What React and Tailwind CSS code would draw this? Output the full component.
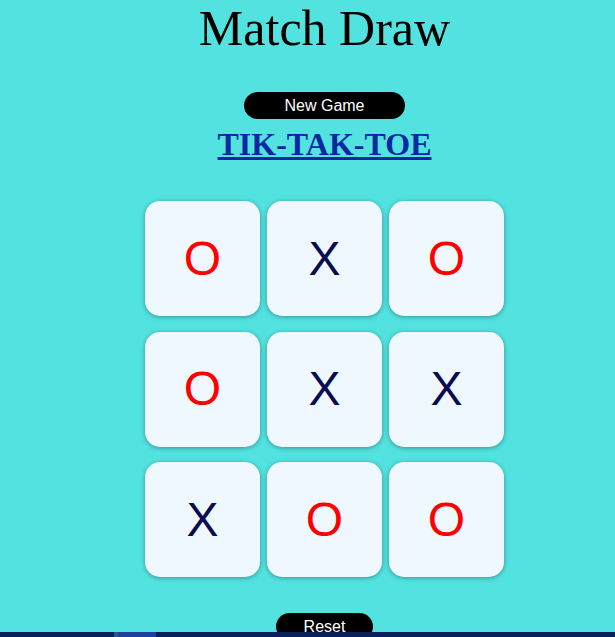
import React from "react";

const board = ["O", "X", "O", "O", "X", "X", "X", "O", "O"];

export default function App() {
  return (
    <div className="relative h-[637px] w-[615px] overflow-hidden bg-[#52e3e1]">
      <div className="flex w-[649px] flex-col items-center">
        <h1 className="mt-px text-[50px] leading-[55px] text-black font-['Liberation_Serif',serif]">
          Match Draw
        </h1>
        <button className="mt-[36px] h-[27px] w-[161px] rounded-full bg-black text-[16px] leading-[27px] text-white font-['Liberation_Sans',Arial,sans-serif]">
          New Game
        </button>
        <a
          href="#"
          className="mt-[7px] text-[32px] font-bold leading-[37px] text-[#0a28a0] underline font-['Liberation_Serif',serif]"
        >
          TIK-TAK-TOE
        </a>
        <div className="mt-[38px] grid grid-cols-[115px_115px_115px] gap-x-[7px] gap-y-[15.5px]">
          {board.map((v, i) => (
            <div
              key={i}
              className="flex h-[115px] w-[115px] items-center justify-center rounded-[15px] bg-[#f0f8ff] shadow-[0_1px_5px_rgba(0,0,0,0.35)]"
            >
              <span
                className={
                  "text-[48px] leading-none font-['Liberation_Sans',Arial,sans-serif] " +
                  (v === "O" ? "text-[#ff0000]" : "text-[#0b0b4f]")
                }
              >
                {v}
              </span>
            </div>
          ))}
        </div>
        <button className="mt-[36px] h-[27px] w-[97px] rounded-full bg-black text-[16px] leading-[27px] text-white font-['Liberation_Sans',Arial,sans-serif]">
          Reset
        </button>
      </div>
      <div className="absolute bottom-0 left-0 flex h-[5px] w-full bg-[#0b1f5c]">
        <div className="ml-[114px] w-[4px] bg-[#2a5a7a]" />
        <div className="w-[38px] bg-[#2040a0]" />
      </div>
    </div>
  );
}
